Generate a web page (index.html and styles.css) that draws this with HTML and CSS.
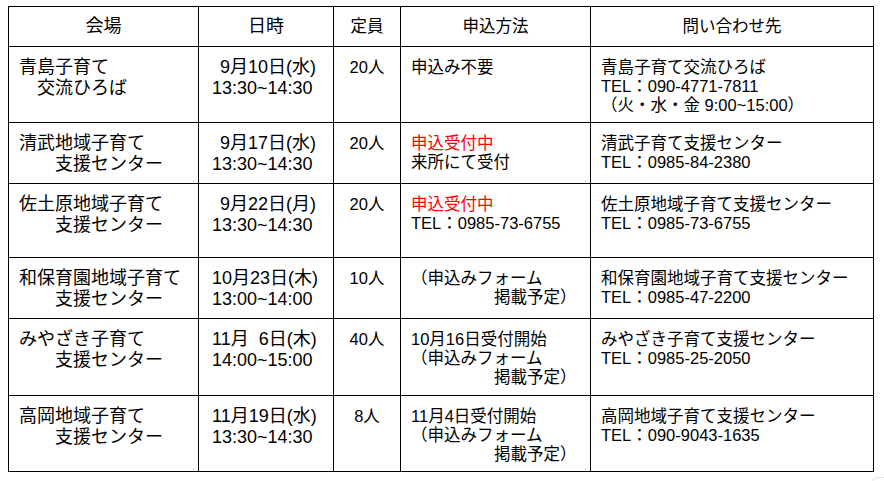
FILE: index.html
```html
<!DOCTYPE html>
<html lang="ja">
<head>
<meta charset="utf-8">
<title>日程表</title>
<link rel="stylesheet" href="styles.css">
</head>
<body>
<div class="sched">
  <div class="c head big">会場</div>
  <div class="c head big">日時</div>
  <div class="c head">定員</div>
  <div class="c head">申込方法</div>
  <div class="c head">問い合わせ先</div>

  <div class="c venue"><span class="ln">青島子育て</span><span class="ln ind1">交流ひろば</span></div>
  <div class="c date"><span class="ln shift">9月10日(水)</span><span class="ln">13:30~14:30</span></div>
  <div class="c cap">20人</div>
  <div class="c method"><span class="ln">申込み不要</span></div>
  <div class="c contact"><span class="ln">青島子育て交流ひろば</span><span class="ln">TEL：090-4771-7811</span><span class="ln">（火・水・金 9:00~15:00）</span></div>

  <div class="c venue"><span class="ln">清武地域子育て</span><span class="ln ind2">支援センター</span></div>
  <div class="c date"><span class="ln shift">9月17日(水)</span><span class="ln">13:30~14:30</span></div>
  <div class="c cap">20人</div>
  <div class="c method"><span class="ln red">申込受付中</span><span class="ln">来所にて受付</span></div>
  <div class="c contact"><span class="ln">清武子育て支援センター</span><span class="ln">TEL：0985-84-2380</span></div>

  <div class="c venue"><span class="ln">佐土原地域子育て</span><span class="ln ind2">支援センター</span></div>
  <div class="c date"><span class="ln shift">9月22日(月)</span><span class="ln">13:30~14:30</span></div>
  <div class="c cap">20人</div>
  <div class="c method"><span class="ln red">申込受付中</span><span class="ln">TEL：0985-73-6755</span></div>
  <div class="c contact"><span class="ln">佐土原地域子育て支援センター</span><span class="ln">TEL：0985-73-6755</span></div>

  <div class="c venue"><span class="ln">和保育園地域子育て</span><span class="ln ind2">支援センター</span></div>
  <div class="c date"><span class="ln">10月23日(木)</span><span class="ln">13:00~14:00</span></div>
  <div class="c cap">10人</div>
  <div class="c method"><span class="ln">（申込みフォーム</span><span class="ln ind3">掲載予定）</span></div>
  <div class="c contact"><span class="ln">和保育園地域子育て支援センター</span><span class="ln">TEL：0985-47-2200</span></div>

  <div class="c venue"><span class="ln">みやざき子育て</span><span class="ln ind2">支援センター</span></div>
  <div class="c date"><span class="ln">11月&nbsp;&nbsp;6日(木)</span><span class="ln">14:00~15:00</span></div>
  <div class="c cap">40人</div>
  <div class="c method"><span class="ln">10月16日受付開始</span><span class="ln">（申込みフォーム</span><span class="ln ind3">掲載予定）</span></div>
  <div class="c contact"><span class="ln">みやざき子育て支援センター</span><span class="ln">TEL：0985-25-2050</span></div>

  <div class="c venue"><span class="ln">高岡地域子育て</span><span class="ln ind2">支援センター</span></div>
  <div class="c date"><span class="ln">11月19日(水)</span><span class="ln">13:30~14:30</span></div>
  <div class="c cap">8人</div>
  <div class="c method"><span class="ln">11月4日受付開始</span><span class="ln">（申込みフォーム</span><span class="ln ind3">掲載予定）</span></div>
  <div class="c contact"><span class="ln">高岡地域子育て支援センター</span><span class="ln">TEL：090-9043-1635</span></div>
</div>
<div class="corner"></div>
</body>
</html>
```

FILE: styles.css
```css
html, body {
  margin: 0;
  padding: 0;
  background: #fff;
  overflow: hidden;
}
body {
  padding: 6px 0 0 8px;
  font-family: "Liberation Sans", "Noto Sans CJK JP", sans-serif;
  font-size: 16.5px;
  line-height: 1.15;
  color: #000;
}
.sched {
  display: grid;
  grid-template-columns: 190px 135px 67px 190px 283px;
  grid-template-rows: 40px 76px 61px 74px 61px 77px 76px;
  width: max-content;
  border-left: 1px solid #000;
  border-top: 1px solid #000;
}
.c {
  box-sizing: border-box;
  border-right: 1px solid #000;
  border-bottom: 1px solid #000;
  padding: 11px 10px 0 10px;
  white-space: nowrap;
}
.head {
  display: flex;
  align-items: center;
  justify-content: center;
  padding: 0;
}
.big {
  font-size: 18px;
}
.ln {
  display: block;
}
.venue {
  font-size: 18px;
  padding-top: 10px;
}
.date {
  padding-top: 10px;
  padding-left: 13px;
  font-size: 18px;
}
.cap {
  text-align: center;
  padding-left: 0;
  padding-right: 0;
}
.ind1 { padding-left: 18px; }
.ind2 { padding-left: 36px; }
.ind3 { padding-left: 83px; }
.shift { padding-left: 8px; }
.red { color: #ff0000; }
.corner {
  position: absolute;
  left: 872px;
  top: 477px;
  width: 24px;
  height: 24px;
  box-sizing: border-box;
  border: 1px solid #e2e2e2;
  border-radius: 6px;
  background: #fff;
}
```
